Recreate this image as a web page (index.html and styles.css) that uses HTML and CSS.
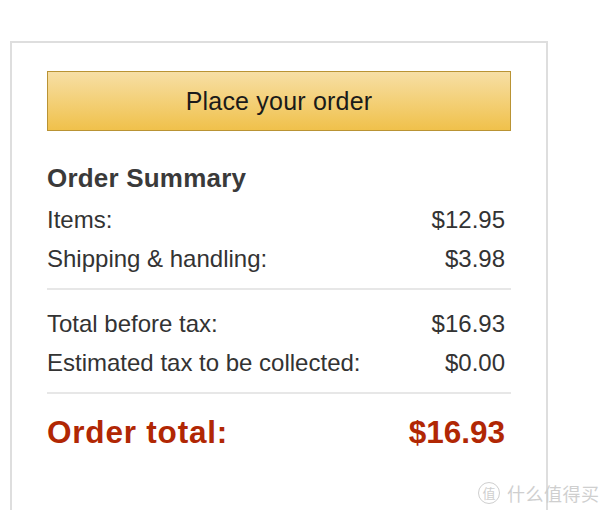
FILE: index.html
```html
<!DOCTYPE html>
<html>
<head>
<meta charset="utf-8">
<link rel="stylesheet" href="styles.css">
</head>
<body>
<div class="panel">
  <button class="place-btn">Place your order</button>
  <h2 class="summary-title">Order Summary</h2>
  <div class="rows">
    <div class="row"><span>Items:</span><span>$12.95</span></div>
    <div class="row"><span>Shipping &amp; handling:</span><span>$3.98</span></div>
  </div>
  <hr class="divider divider-a">
  <div class="rows">
    <div class="row"><span>Total before tax:</span><span>$16.93</span></div>
    <div class="row"><span>Estimated tax to be collected:</span><span>$0.00</span></div>
  </div>
  <hr class="divider divider-b">
  <div class="row total"><span class="total-label">Order total:</span><span>$16.93</span></div>
</div>
<div class="watermark"><span class="wm-badge">值</span><span class="wm-text">什么值得买</span></div>
</body>
</html>
```
FILE: styles.css
```css
html, body {
  margin: 0;
  padding: 0;
  background: #fff;
}
body {
  font-family: "Liberation Sans", Arial, sans-serif;
  color: #333;
  overflow: hidden;
  height: 510px;
}
.panel {
  margin: 41px 0 0 10px;
  width: 464px;
  min-height: 520px;
  border: 2px solid #dedede;
  border-bottom: none;
  padding: 28px 35px 0 35px;
}
.place-btn {
  display: block;
  width: 464px;
  height: 60px;
  margin: 0;
  padding: 0;
  border: 1px solid #b99334;
  background: linear-gradient(to bottom, #f7dfa5, #f0c14b);
  font-family: "Liberation Sans", Arial, sans-serif;
  font-size: 25px;
  letter-spacing: 0.2px;
  color: #1a1a1a;
  text-align: center;
}
.summary-title {
  margin: 32px 0 7px 0;
  font-size: 26px;
  line-height: 30px;
  font-weight: bold;
  color: #3a3a3a;
  letter-spacing: 0.2px;
}
.row {
  display: flex;
  justify-content: space-between;
  padding-right: 6px;
  font-size: 24px;
  line-height: 39px;
}
.divider {
  border: none;
  height: 2px;
  background: #e7e7e7;
  margin: 0;
}
.divider-a {
  margin: 10px 0 14px 0;
}
.divider-b {
  margin: 10px 0 18px 0;
}
.row.total {
  font-size: 31.5px;
  line-height: 40px;
  font-weight: bold;
  color: #b12704;
}
.total-label {
  letter-spacing: 0.8px;
}
.watermark {
  position: absolute;
  left: 478px;
  top: 480px;
  display: flex;
  align-items: center;
  gap: 7px;
  color: #cfcfcf;
  font-family: "Noto Sans CJK SC", sans-serif;
}
.wm-badge {
  width: 20px;
  height: 20px;
  border: 1.5px solid #cfcfcf;
  border-radius: 50%;
  font-size: 13px;
  line-height: 20px;
  text-align: center;
}
.wm-text {
  font-size: 18px;
  letter-spacing: 0.5px;
}
```
